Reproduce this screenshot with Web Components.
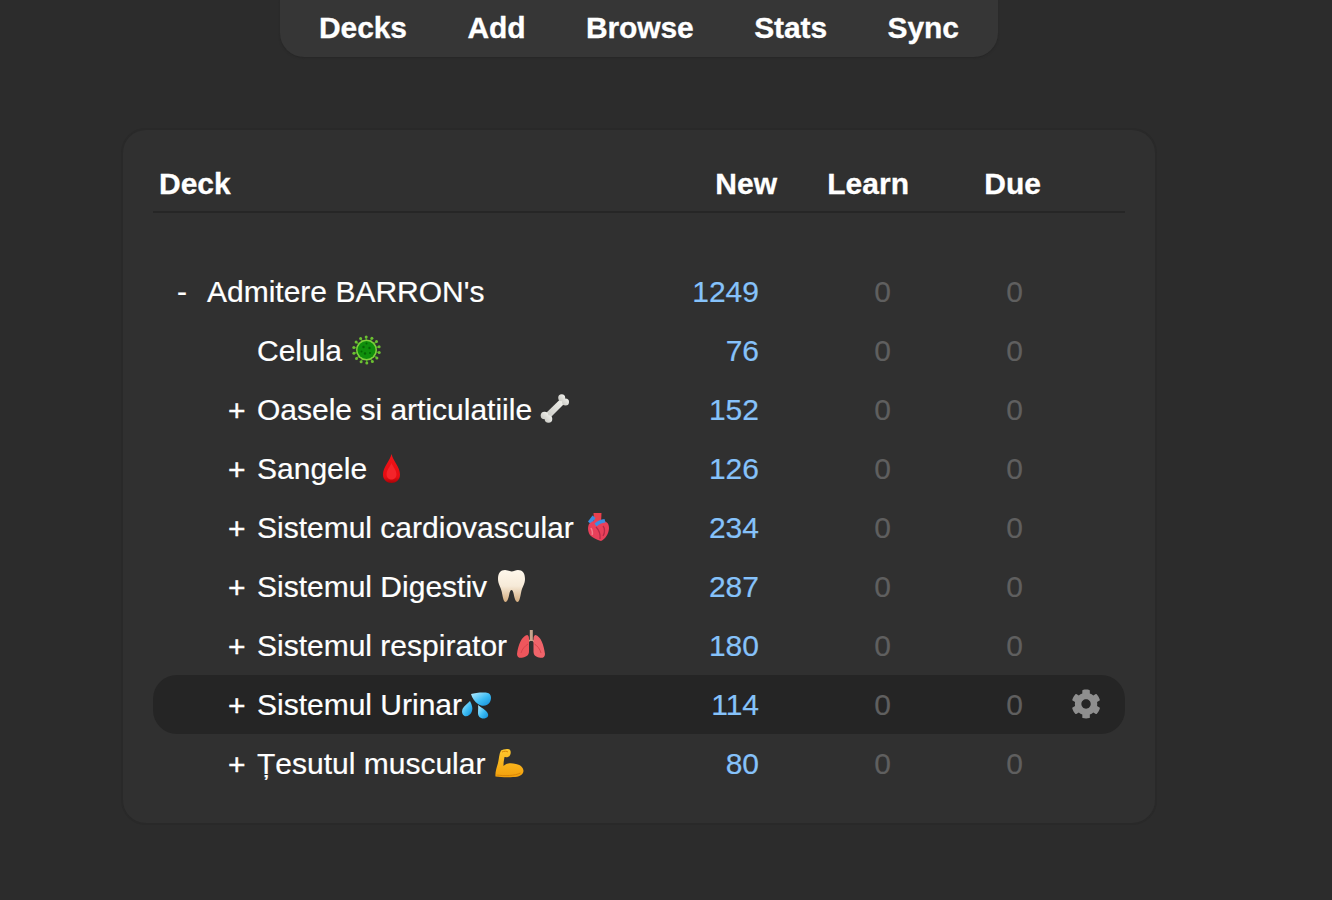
<!DOCTYPE html>
<html lang="en">
<head>
<meta charset="utf-8">
<title>Decks</title>
<style>
  html, body { margin: 0; background: #2c2c2c; }
  body { font-family: "Liberation Sans", Arial, sans-serif; color: #fff; height: 900px; overflow: hidden; }
</style>
</head>
<body>
<top-nav>
  <a>Decks</a><a>Add</a><a>Browse</a><a>Stats</a><a>Sync</a>
</top-nav>
<deck-card>
  <deck-head></deck-head>
  <deck-row toggle="-" level="0" name="Admitere BARRON's" count="1249"></deck-row>
  <deck-row level="1" name="Celula" count="76"><deck-emoji kind="virus"></deck-emoji></deck-row>
  <deck-row toggle="+" level="1" name="Oasele si articulatiile" count="152"><deck-emoji kind="bone"></deck-emoji></deck-row>
  <deck-row toggle="+" level="1" name="Sangele" count="126"><deck-emoji kind="drop"></deck-emoji></deck-row>
  <deck-row toggle="+" level="1" name="Sistemul cardiovascular" count="234"><deck-emoji kind="heart"></deck-emoji></deck-row>
  <deck-row toggle="+" level="1" name="Sistemul Digestiv" count="287"><deck-emoji kind="tooth"></deck-emoji></deck-row>
  <deck-row toggle="+" level="1" name="Sistemul respirator" count="180"><deck-emoji kind="lungs"></deck-emoji></deck-row>
  <deck-row toggle="+" level="1" name="Sistemul Urinar" count="114" active><deck-emoji kind="sweat" tight></deck-emoji></deck-row>
  <deck-row toggle="+" level="1" name="Țesutul muscular" count="80"><deck-emoji kind="muscle"></deck-emoji></deck-row>
</deck-card>

<script>
class TopNav extends HTMLElement {
  constructor() {
    super();
    this.attachShadow({ mode: 'open' });
    this.shadowRoot.innerHTML = `
      <style>
        :host {
          display: flex;
          width: 718px;
          height: 57px;
          margin: 0 auto 0 280px;
          padding: 0 39px 2px;
          box-sizing: border-box;
          background: #363636;
          border-radius: 0 0 24px 24px;
          box-shadow: 0 1px 2px #262626;
          gap: 60.5px;
          align-items: center;
          font-size: 30px;
          font-weight: bold;
          -webkit-text-stroke: 0.3px #fff;
        }
        ::slotted(a) { color: #fff; letter-spacing: -0.1px; }
      </style>
      <slot></slot>
    `;
  }
}
customElements.define('top-nav', TopNav);

class DeckCard extends HTMLElement {
  constructor() {
    super();
    this.attachShadow({ mode: 'open' });
    this.shadowRoot.innerHTML = `
      <style>
        :host {
          display: block;
          width: 1036px;
          height: 697px;
          box-sizing: border-box;
          margin: 71px 0 0 121px;
          padding: 31px 30px 0 30px;
          background: #303030;
          border: 2px solid #292929;
          border-radius: 25px;
        }
      </style>
      <slot></slot>
    `;
  }
}
customElements.define('deck-card', DeckCard);

class DeckHead extends HTMLElement {
  constructor() {
    super();
    this.attachShadow({ mode: 'open' });
    this.shadowRoot.innerHTML = `
      <style>
        :host {
          display: grid;
          grid-template-columns: 524px 100px 132px 132px;
          height: 52px;
          padding-bottom: 5px;
          margin-bottom: 49px;
          align-items: center;
          border-bottom: 2px solid #262626;
          font-size: 30px;
          font-weight: bold;
          -webkit-text-stroke: 0.3px #fff;
          box-sizing: border-box;
        }
        .num { text-align: right; }
        .deck { padding-left: 6px; }
      </style>
      <div class="deck">Deck</div><div class="num">New</div><div class="num">Learn</div><div class="num">Due</div>
    `;
  }
}
customElements.define('deck-head', DeckHead);

class DeckRow extends HTMLElement {
  constructor() {
    super();
    this.attachShadow({ mode: 'open' });
    const level = Number(this.getAttribute('level') || 0);
    const toggle = this.getAttribute('toggle') || '';
    const gear = this.hasAttribute('active') ? `
      <svg class="gear" viewBox="0 0 512 512" width="30" height="30" aria-hidden="true">
        <path fill="#8f8f8f" d="M487 316l-42-25c4-23 4-47 0-70l42-25c5-3 7-9 5-14-11-35-30-67-54-94-4-4-10-5-15-2l-42 25c-18-15-38-27-60-35V27c0-6-4-10-9-11-36-8-74-8-110 0-5 1-9 5-9 11v49c-22 8-42 20-60 35L91 87c-5-3-11-2-15 2-24 27-43 59-54 94-2 5 0 11 5 14l42 25c-4 23-4 47 0 70l-42 25c-5 3-7 9-5 14 11 35 30 67 54 94 4 4 10 5 15 2l42-25c18 15 38 27 60 35v49c0 6 4 10 9 11 36 8 74 8 110 0 5-1 9-5 9-11v-49c22-8 42-20 60-35l42 25c5 3 11 2 15-2 24-27 43-59 54-94 2-5 0-11-5-14zM257 336c-44 0-80-36-80-80s36-80 80-80 80 36 80 80-36 80-80 80z"/>
      </svg>` : '';
    this.shadowRoot.innerHTML = `
      <style>
        :host {
          display: grid;
          grid-template-columns: 506px 100px 132px 132px 102px;
          height: 59px;
          align-items: center;
          font-size: 30px;
          -webkit-text-stroke: 0.2px;
          border-radius: 24px;
          box-sizing: border-box;
        }
        :host([active]) { background: #252525; }
        .deck { display: flex; align-items: center; white-space: nowrap; padding-left: ${20 + level * 50}px; }
        .toggle { flex: none; width: ${level ? 29 : 30}px; margin-left: ${level ? 5 : 4}px; }
        .toggle.plus { margin-top: 2px; -webkit-text-stroke: 0.4px #fff; }
        .num { text-align: right; }
        .new { color: #86c2fa; }
        .zero { color: #5f5f5f; }
        .gear-cell { display: flex; padding-left: 48px; margin-bottom: 2px; }
      </style>
      <div class="deck">
        <span class="toggle ${toggle === '+' ? 'plus' : ''}">${toggle}</span>
        <span class="name">${this.getAttribute('name')}</span>
        <slot></slot>
      </div>
      <div class="num new">${this.getAttribute('count')}</div>
      <div class="num zero">0</div>
      <div class="num zero">0</div>
      <div class="gear-cell">${gear}</div>
    `;
  }
}
customElements.define('deck-row', DeckRow);

// spikes of the virus, drawn around its centre
function virusSpikes() {
  let out = '';
  for (let i = 0; i < 14; i++) {
    const a = (i / 14) * Math.PI * 2 + 0.2;
    const x = (16.5 + Math.cos(a) * 13).toFixed(1);
    const y = (14 + Math.sin(a) * 13).toFixed(1);
    out += `<path d="M16.5 14L${x} ${y}" stroke="#3f9a1e" stroke-width="1.4"/><circle cx="${x}" cy="${y}" r="1.5" fill="#6cc032"/>`;
  }
  return out;
}

const EMOJI = {
  virus: `
    ${virusSpikes()}
    <circle cx="16.5" cy="14" r="10.500" fill="#7fce3e"/>
    <circle cx="16.500" cy="14" r="9" fill="#0f8f0c"/>
    <circle cx="13.500" cy="11" r="1.200" fill="#056405"/><circle cx="19.500" cy="12" r="1.200" fill="#056405"/>
    <circle cx="15" cy="17.500" r="1.200" fill="#056405"/><circle cx="20" cy="17" r="1" fill="#056405"/>
    <circle cx="11.500" cy="15.500" r="1" fill="#056405"/><circle cx="16.500" cy="7.500" r="1" fill="#056405"/>`,
  bone: `
    <defs><linearGradient id="b" x1="1" y1="0" x2="0" y2="1"><stop offset="0" stop-color="#f4f4f0"/><stop offset="1" stop-color="#c6c6c0"/></linearGradient></defs>
    <g fill="url(#b)">
      <path d="M5 19L21 3.500l4 4.500L9 24z"/>
      <circle cx="4.500" cy="20.500" r="3.800"/><circle cx="8.500" cy="24" r="3.800"/>
      <circle cx="21.700" cy="2.800" r="3.500"/><circle cx="25.500" cy="7" r="3.500"/>
    </g>`,
  drop: `
    <defs><linearGradient id="d" x1="0" y1="0" x2="0" y2="1"><stop offset="0" stop-color="#f01418"/><stop offset="0.8" stop-color="#e40c12"/><stop offset="1" stop-color="#a80408"/></linearGradient></defs>
    <path d="M16.500 0C15 7 8 13 8 20.500c0 5.500 4 8.500 8.500 8.500s8.500-3 8.500-8.500C25 13 18 7 16.500 0z" fill="url(#d)"/>
    <path d="M16.500 9c-1.500 4-5 7-5 11.500 0 3 2.500 5 5 5s5-2 5-5C21.500 16 18 13 16.500 9z" fill="#f4242a"/>`,
  heart: `
    <g transform="translate(-1 1)">
      <path d="M12.500 -1h8l-.5 10h-7z" fill="#e8404e"/>
      <path d="M7 7.500l4.500-6 3 2.500-4.500 6.500z" fill="#3b8ee0"/>
      <path d="M8 10C6 14 7 21 12 23.500c3 1.800 6 3 8 3.500 4-1.500 8-7.500 8-13 0-5-3-7-6-7-4-2-10-1-14 3z" fill="#e9405a"/>
      <path d="M13.500 9.500c3-2.500 6-4 10-4.500l1 3.500c-4 .5-6.500 1.500-9 4z" fill="#3b8ee0"/>
      <path d="M15 13c3 3 4.500 8 4 12M22 12c2 2 2 7 0 10" fill="none" stroke="#b42a48" stroke-width="1.300"/>
      <path d="M10 14c1 2 2 5 1 7" fill="none" stroke="#f47c8a" stroke-width="1.500"/>
    </g>`,
  tooth: `
    <defs><linearGradient id="t" x1="0" y1="0" x2="0" y2="1"><stop offset="0" stop-color="#fff8ec"/><stop offset="0.5" stop-color="#f6ead8"/><stop offset="1" stop-color="#d4ac7e"/></linearGradient></defs>
    <path d="M10 -2C5.500 -2 3 1 3 7c0 5 2.800 8 3.800 13 .8 4 1.700 10 3.700 10s3-4 3.800-8c.4-2 1.200-4 2.200-4s1.800 2 2.200 4c.8 4 1.800 8 3.800 8s2.900-6 3.700-10c1-5 3.800-8 3.800-13 0-6-2.500-9-7-9-2.500 0-4.200 1.400-6.500 1.400S12.500 -2 10 -2z" fill="url(#t)"/>`,
  lungs: `
    <path d="M14.800 -1h3v11h-3z" fill="#c8a48c"/>
    <path d="M15 9l-3 3M17.500 9l3 3" stroke="#c8a48c" stroke-width="1.500"/>
    <path d="M12 4C7 5 3 14 2 23c0 3.500 3 4.500 6 3.500 3-.8 6-2 6-6V8c0-3-1-4-2-4z" fill="#ee565c"/>
    <path d="M20.500 4c5 1 8.500 10 9.500 19 0 3.500-3 4.500-6 3.500-3-.8-5.500-2-5.500-6V8c0-3 1-4 2-4z" fill="#f0646a"/>
    <path d="M13 13c-3 2-6 5-7 9M19.500 13c3 2 5.500 5 6.500 9" fill="none" stroke="#d8444c" stroke-width="1"/>`,
  sweat: `
    <defs><linearGradient id="s" x1="0" y1="0" x2="1" y2="1"><stop offset="0" stop-color="#b8edff"/><stop offset="0.55" stop-color="#3cbcf4"/><stop offset="1" stop-color="#128cd6"/></linearGradient></defs>
    <path d="M8 4c4-1 12-2 17-1 3 1 4 5 2 9-2 4-8 5-12 2-3-2-6-6-7-10z" fill="url(#s)"/>
    <path d="M7 11c2 4 3 7 2 10-1 4-5 6-7.500 5C-1 24.500-1.500 22-.5 19 1 16 5 13 7 11z" fill="url(#s)"/>
    <path d="M15 15c2 2 9 5 10 9 1 3-2 4.500-4.500 4.500-3.500 0-5.500-2.500-5.500-5.500 0-3 .5-6 0-8z" fill="url(#s)"/>`,
  muscle: `
    <defs><linearGradient id="m" x1="0" y1="0" x2="0" y2="1"><stop offset="0" stop-color="#ffc92e"/><stop offset="1" stop-color="#f2a00c"/></linearGradient></defs>
    <path d="M8 1.500C10 0 16-1 17 1c1.500 2 .5 6-2 7-2 .5-3 0-3.500 0-.5 3-1 5-1 9 2.500-3 7.500-3.500 12.500-2 5 1 7.500 4 7.500 7-.5 4-4.500 6-10.500 6-6 .5-13 0-17.500-.5-.5-3.500 1-8.500 2.500-13.500C6 10 6 5 8 1.500z" fill="url(#m)"/>
    <path d="M9 3c2-1 5-1 6 0M3.500 26c8 1 18 1 24-2" fill="none" stroke="#d88606" stroke-width="1"/>`
};

class DeckEmoji extends HTMLElement {
  constructor() {
    super();
    this.attachShadow({ mode: 'open' });
    const tight = this.hasAttribute('tight');
    this.shadowRoot.innerHTML = `
      <style>
        :host { display: block; width: 30px; height: 30px; margin-left: ${tight ? 1 : 8}px; flex: none; }
        svg { display: block; overflow: visible; }
      </style>
      <svg viewBox="0 0 30 30" width="30" height="30" aria-hidden="true">${EMOJI[this.getAttribute('kind')] || ''}</svg>
    `;
  }
}
customElements.define('deck-emoji', DeckEmoji);
</script>
</body>
</html>
